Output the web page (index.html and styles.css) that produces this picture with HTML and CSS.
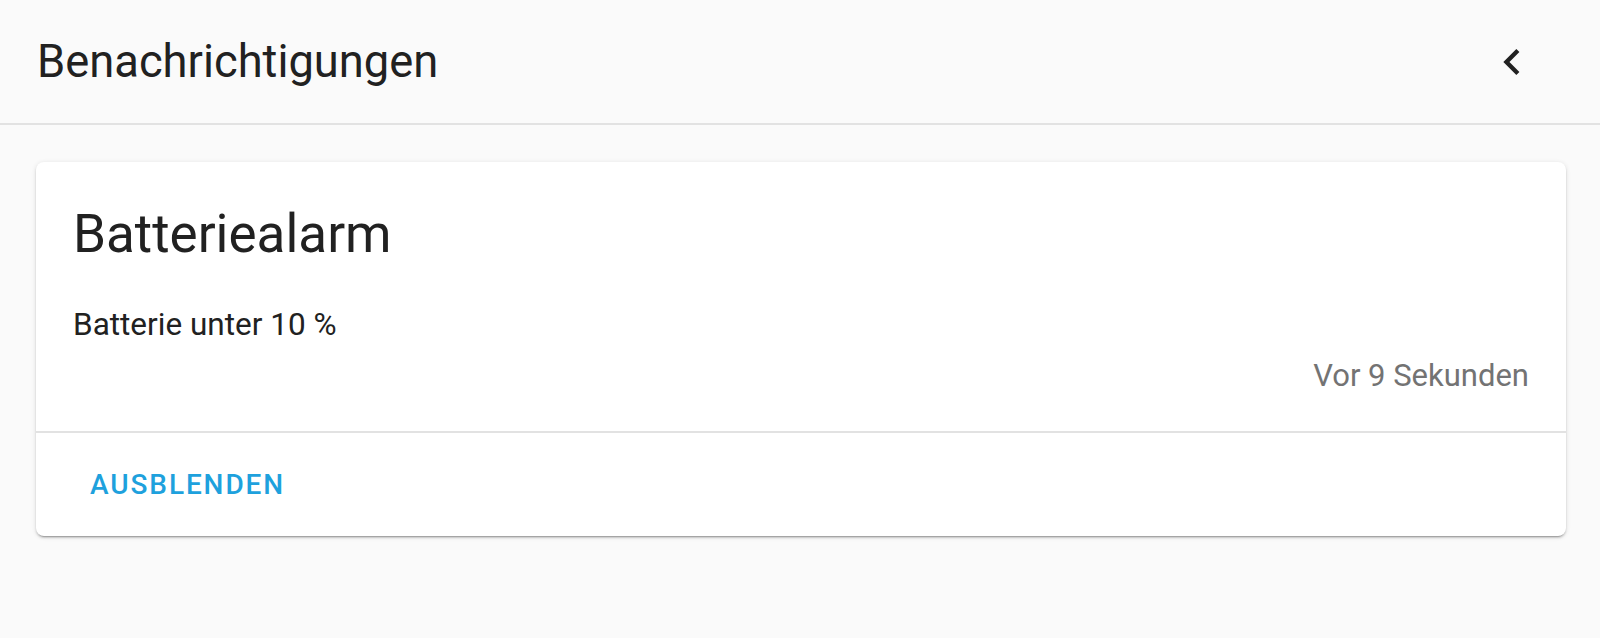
FILE: index.html
```html
<!DOCTYPE html>
<html lang="de">
<head>
<meta charset="utf-8">
<title>Benachrichtigungen</title>
<link rel="stylesheet" href="styles.css">
</head>
<body>
<header class="topbar">
  <h1 class="topbar-title">Benachrichtigungen</h1>
  <button class="icon-btn" aria-label="Schließen">
    <svg viewBox="0 0 24 24" width="52" height="52"><path d="M15.41 7.41L14 6l-6 6 6 6 1.41-1.41L10.83 12z" fill="#212121"/></svg>
  </button>
</header>
<main class="content">
  <section class="card">
    <div class="card-body">
      <h2 class="card-title">Batteriealarm</h2>
      <p class="card-message">Batterie unter 10 %</p>
      <div class="card-time">Vor 9 Sekunden</div>
    </div>
    <div class="card-actions">
      <button class="text-btn">Ausblenden</button>
    </div>
  </section>
</main>
</body>
</html>
```
FILE: styles.css
```css
html, body {
  margin: 0;
  padding: 0;
  background: #fafafa;
  font-family: Roboto, "Noto Sans", Arial, sans-serif;
  color: #212121;
}
body {
  height: 638px;
  overflow: hidden;
}
.topbar {
  height: 123px;
  border-bottom: 2px solid #e2e2e2;
  display: flex;
  align-items: center;
  justify-content: space-between;
  padding: 0 62px 0 37px;
  box-sizing: content-box;
}
.topbar-title {
  margin: 0;
  font-size: 45.3px;
  font-weight: 400;
  color: #212121;
}
.icon-btn {
  border: 0;
  background: none;
  padding: 0;
  width: 52px;
  height: 52px;
  display: block;
}
.icon-btn svg { display: block; }
.content {
  padding: 37px 34px 0 36px;
}
.card {
  background: #fff;
  border-radius: 8px;
  box-shadow: 0 2px 2px rgba(0,0,0,.14), 0 1px 5px rgba(0,0,0,.12), 0 3px 1px -2px rgba(0,0,0,.2);
}
.card-body {
  padding: 40px 37px 35px 37px;
}
.card-title {
  margin: 0;
  font-size: 53px;
  line-height: 64px;
  font-weight: 400;
  color: #212121;
}
.card-message {
  margin: 39px 0 0;
  font-size: 31.5px;
  line-height: 40px;
  color: #212121;
}
.card-time {
  margin-top: 11px;
  font-size: 31px;
  line-height: 40px;
  color: #737373;
  text-align: right;
}
.card-actions {
  border-top: 2px solid #e2e2e2;
  height: 103px;
  display: flex;
  align-items: center;
  padding-left: 54px;
}
.text-btn {
  border: 0;
  background: none;
  padding: 0;
  font-family: Roboto, "Noto Sans", Arial, sans-serif;
  font-size: 28px;
  font-weight: 500;
  letter-spacing: 1.9px;
  text-transform: uppercase;
  color: #1ea1dd;
}
```
